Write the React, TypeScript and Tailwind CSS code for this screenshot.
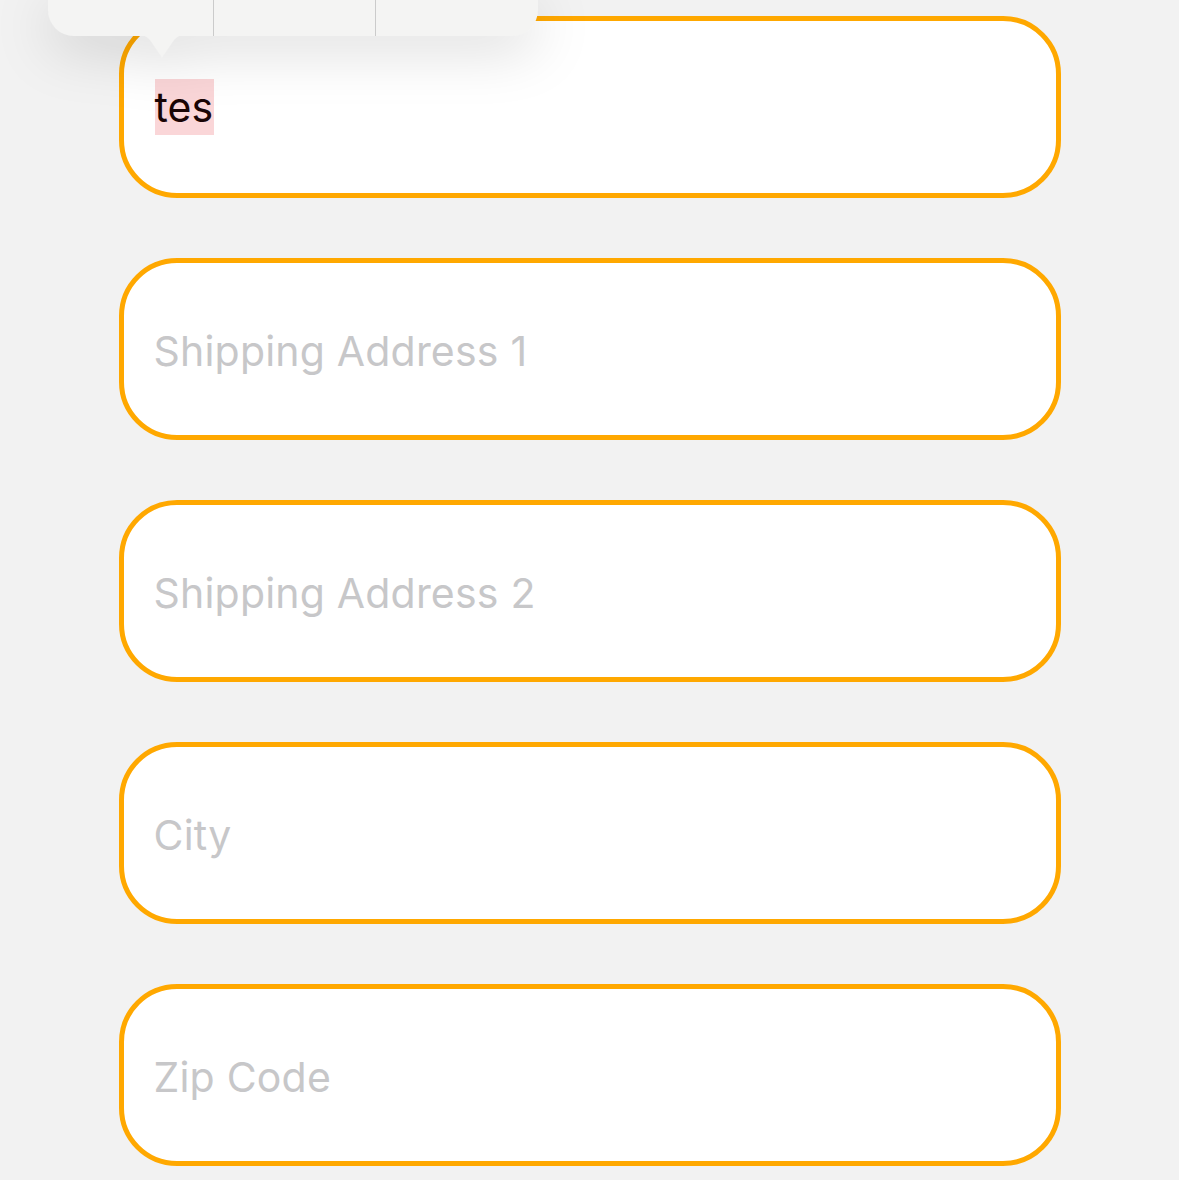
import { FC } from "react";

const fields = ["Shipping Address 1", "Shipping Address 2", "City", "Zip Code"];

const App: FC = () => {
  return (
    <div
      className="relative min-h-[1180px] w-full overflow-hidden bg-[#f2f2f2]"
      style={{ fontFamily: "Inter, 'Noto Sans', sans-serif" }}
    >
      {/* Form fields */}
      <div className="mx-auto flex w-[942px] flex-col gap-[60px] pt-4">
        <div className="flex h-[182px] items-center rounded-[58px] border-[5px] border-[#ffa800] bg-white pl-[31px]">
          <span className="bg-[#fad6d8] pr-[1px] text-[41px] leading-[56px] text-[#1a0505]">
            tes
          </span>
        </div>
        {fields.map((label) => (
          <div
            key={label}
            className="flex h-[182px] items-center rounded-[58px] border-[5px] border-[#ffa800] bg-white pl-[30px]"
          >
            <span className="pt-[3px] text-[41px] leading-[56px] tracking-[0.2px] text-[#c7c7c9]">
              {label}
            </span>
          </div>
        ))}
      </div>

      {/* Edit menu popover */}
      <div className="absolute left-[48px] top-0 drop-shadow-[0_12px_28px_rgba(0,0,0,0.16)]">
        <div className="flex h-[36px] w-[490px] rounded-b-[26px] bg-[#f4f4f3]">
          <div className="w-[166px] border-r border-[#cbcbcb]" />
          <div className="w-[162px] border-r border-[#cbcbcb]" />
          <div className="flex-1" />
        </div>
        <svg
          className="absolute left-[91px] top-[35px]"
          width="46"
          height="24"
          viewBox="0 0 46 24"
        >
          <path
            d="M0 0 H46 C40 0 38 2 35 5 L24 21 C23 23 23 23 22 21 L11 5 C8 2 6 0 0 0 Z"
            fill="#f4f4f3"
          />
        </svg>
      </div>
    </div>
  );
};

export default App;
